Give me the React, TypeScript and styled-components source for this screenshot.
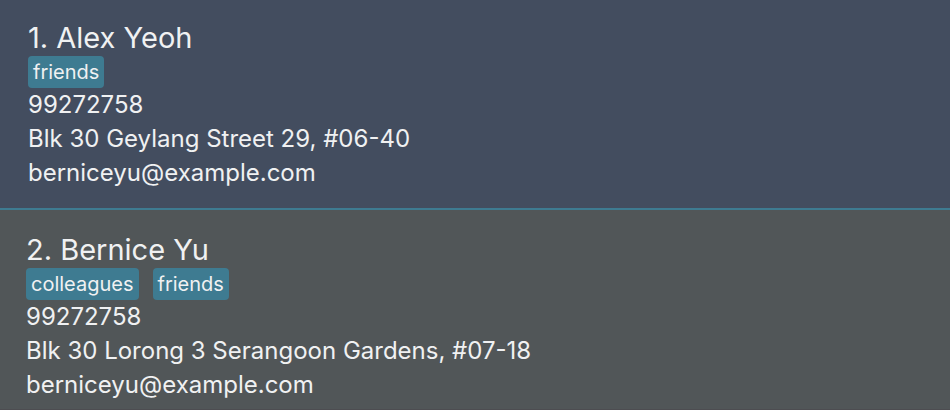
import React from "react";
import styled, { createGlobalStyle } from "styled-components";

const GlobalStyle = createGlobalStyle`
  body {
    margin: 0;
    background: #515658;
    font-family: Inter, "Liberation Sans", sans-serif;
    color: #f0f1f2;
  }
`;

const PersonList = styled.ul`
  list-style: none;
  margin: 0;
  padding: 0;
`;

const PersonCard = styled.li<{ $selected?: boolean }>`
  padding: ${(p) => (p.$selected ? "20px 28px 18px" : "22px 26px 7px")};
  background: ${(p) => (p.$selected ? "#434d5f" : "#515658")};
  border-bottom: ${(p) => (p.$selected ? "2px solid #3e7b91" : "1px solid #4d4d51")};
`;

const Name = styled.h2`
  margin: 0;
  font-size: 29px;
  line-height: 36px;
  font-weight: 400;
`;

const Tags = styled.div`
  display: flex;
  gap: 14px;
`;

const Tag = styled.span`
  padding: 0 5px;
  border-radius: 4px;
  background: #3e7b91;
  font-size: 20px;
  line-height: 32px;
`;

const Detail = styled.p`
  margin: 0;
  font-size: 24px;
  line-height: 34px;
`;

const people = [
  {
    name: "Alex Yeoh",
    tags: ["friends"],
    phone: "99272758",
    address: "Blk 30 Geylang Street 29, #06-40",
    email: "berniceyu@example.com",
    selected: true,
  },
  {
    name: "Bernice Yu",
    tags: ["colleagues", "friends"],
    phone: "99272758",
    address: "Blk 30 Lorong 3 Serangoon Gardens, #07-18",
    email: "berniceyu@example.com",
    selected: false,
  },
];

export default function App() {
  return (
    <>
      <GlobalStyle />
      <PersonList>
        {people.map((person, i) => (
          <PersonCard key={person.name} $selected={person.selected}>
            <Name>{`${i + 1}. ${person.name}`}</Name>
            <Tags>
              {person.tags.map((tag) => (
                <Tag key={tag}>{tag}</Tag>
              ))}
            </Tags>
            <Detail>{person.phone}</Detail>
            <Detail>{person.address}</Detail>
            <Detail>{person.email}</Detail>
          </PersonCard>
        ))}
      </PersonList>
    </>
  );
}
